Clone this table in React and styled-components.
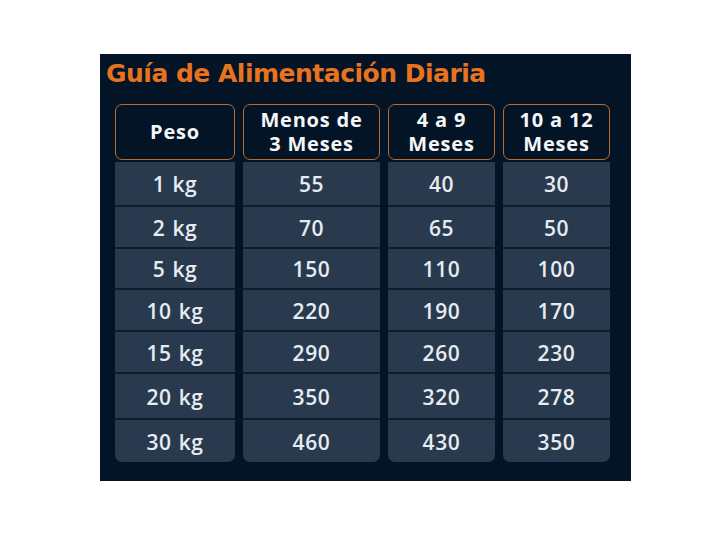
import React from "react";
import styled, { createGlobalStyle } from "styled-components";

const GlobalStyle = createGlobalStyle`
  html, body {
    margin: 0;
    padding: 0;
    background: #ffffff;
  }
`;

const rowHeights = [43, 42, 41, 42, 42, 46, 44];

const columns = [
  { title: ["Peso"], width: 120, values: ["1 kg", "2 kg", "5 kg", "10 kg", "15 kg", "20 kg", "30 kg"] },
  { title: ["Menos de", "3 Meses"], width: 137, values: ["55", "70", "150", "220", "290", "350", "460"] },
  { title: ["4 a 9", "Meses"], width: 107, values: ["40", "65", "110", "190", "260", "320", "430"] },
  { title: ["10 a 12", "Meses"], width: 107, values: ["30", "50", "100", "170", "230", "278", "350"] },
];

function App() {
  return (
    <Page>
      <GlobalStyle />
      <Panel>
        <Title>Guía de Alimentación Diaria</Title>
        <Table>
          {columns.map((col) => (
            <Column key={col.title.join(" ")} width={col.width}>
              <Header>
                {col.title.map((line) => (
                  <HeaderLine key={line}>{line}</HeaderLine>
                ))}
              </Header>
              <Body>
                {col.values.map((v, i) => (
                  <Cell key={i} height={rowHeights[i]}>
                    {v}
                  </Cell>
                ))}
              </Body>
            </Column>
          ))}
        </Table>
      </Panel>
    </Page>
  );
}

const Page = styled.div`
  padding: 54px 0 0 100px;
`;

const Panel = styled.div`
  width: 531px;
  height: 427px;
  box-sizing: border-box;
  background-color: #031426;
  padding: 5px 0 0 6px;
`;

const Title = styled.h1`
  margin: 0;
  color: #e8731f;
  font-family: "DejaVu Sans", "Noto Sans", sans-serif;
  font-size: 25px;
  font-weight: 700;
  line-height: 30px;
  letter-spacing: -0.5px;
`;

const Table = styled.div`
  display: flex;
  gap: 8px;
  margin: 15px 0 0 9px;
`;

const Column = styled.div`
  width: ${(props) => props.width}px;
  display: flex;
  flex-direction: column;
  gap: 2px;
`;

const Header = styled.div`
  height: 56px;
  box-sizing: border-box;
  border: 1.5px solid #b96a2e;
  border-radius: 7px;
  background-color: #031426;
  color: #f4f6f8;
  font-family: "Open Sans", "Noto Sans", sans-serif;
  font-size: 20px;
  font-weight: 700;
  display: flex;
  flex-direction: column;
  align-items: center;
  justify-content: center;
  letter-spacing: 0.8px;
`;

const HeaderLine = styled.span`
  display: block;
  line-height: 24px;
`;

const Body = styled.div`
  background-color: #293a4e;
  border-radius: 0 0 7px 7px;
  overflow: hidden;
  display: flex;
  flex-direction: column;
`;

const Cell = styled.div`
  height: ${(props) => props.height}px;
  box-sizing: border-box;
  display: flex;
  align-items: center;
  justify-content: center;
  color: #e6ecf1;
  font-family: "Open Sans", "Noto Sans", sans-serif;
  font-size: 21px;
  font-weight: 600;
  letter-spacing: 0.6px;
  word-spacing: 1px;
  padding-top: 1px;

  & + & {
    border-top: 2px solid #0f1e2e;
  }
`;

export default App;
